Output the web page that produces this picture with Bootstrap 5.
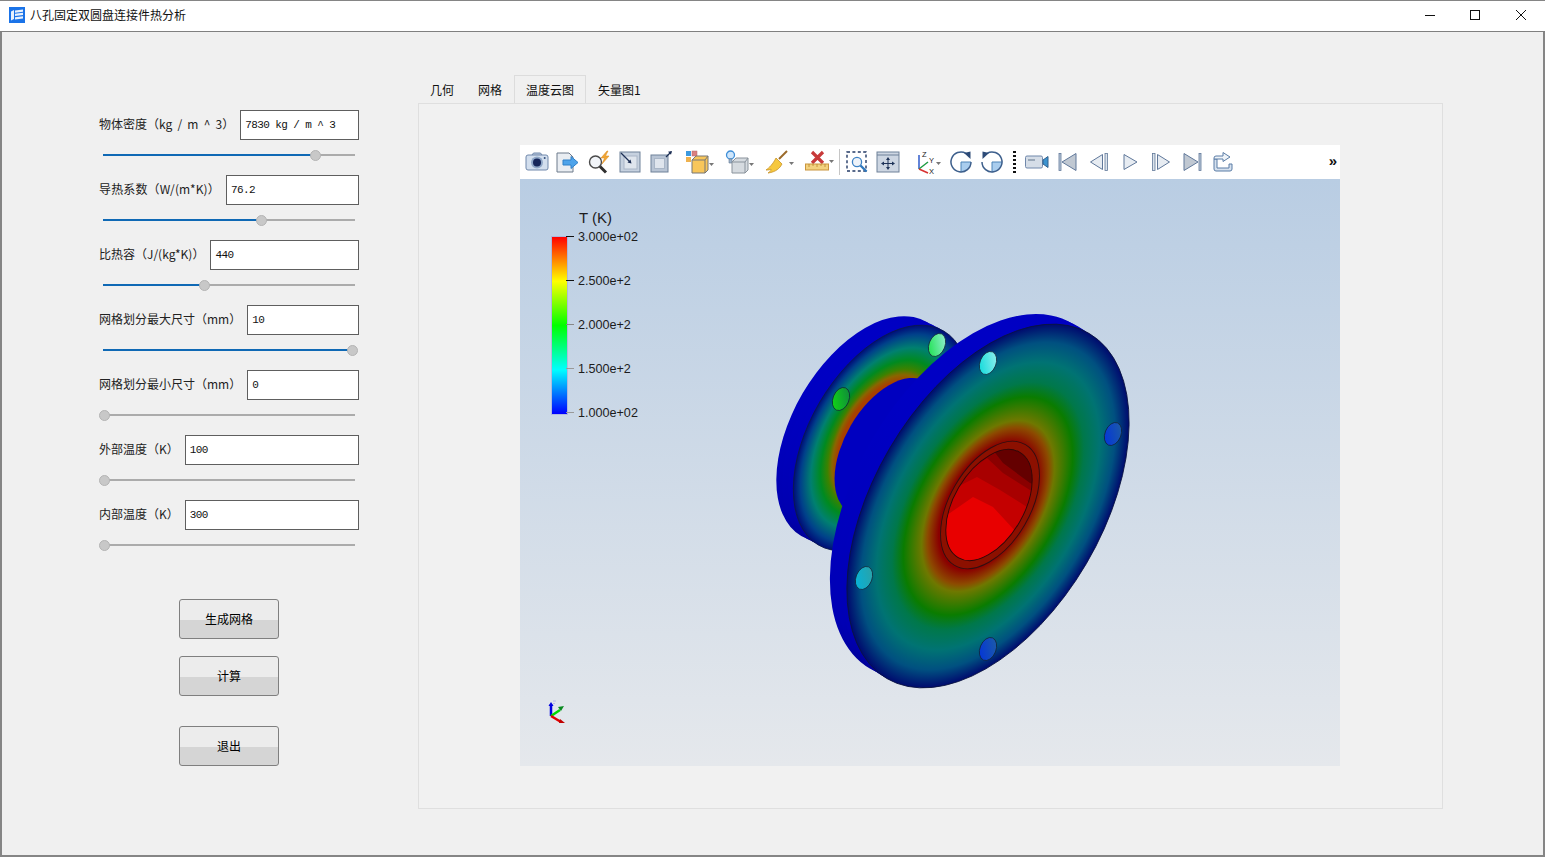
<!DOCTYPE html>
<html lang="zh-CN">
<head>
    <meta charset="UTF-8">
    <meta name="viewport" content="width=device-width, initial-scale=1.0">
    <title>八孔固定双圆盘连接件热分析</title>
    <link href="https://cdn.jsdelivr.net/npm/bootstrap@5.3.3/dist/css/bootstrap.min.css" rel="stylesheet" crossorigin="anonymous">
    <style>
        html, body { height: 100%; overflow: hidden; }
        body { font-family: "Noto Sans CJK SC", "Liberation Sans", sans-serif; font-size: 12px; color: #111; background: #f0f0f0; }
        .app-window { width: 1545px; height: 857px; border: 2px solid #858585; border-top-width: 1px; background: #f0f0f0; }
        .title-bar { height: 28px; background: #fff; margin: 0 -2px; padding: 0 1px 2px 9px; border-bottom: 1px solid #808080; box-sizing: content-box; line-height: 28px; }
        .title-text { margin-left: 5px; font-size: 12px; color: #111; }
        .win-btn { width: 46px; height: 28px; display: flex; align-items: center; justify-content: center; }
        .win-btn.win-min { width: 44px; }

        .side-panel { width: 416px; padding: 78px 0 0 97px; flex: none; }
        .param-group { width: 260px; height: 65px; }
        .param-row { height: 30px; gap: 6px; }
        .param-label { white-space: nowrap; font-size: 12px; color: #222; margin-bottom: 2px; }
        .param-label.label-spaced { word-spacing: 2.5px; }
        .param-label.label-loose { letter-spacing: .15px; }
        .param-input.form-control { flex: 1 1 0; min-width: 0; height: 30px; min-height: 0; border: 1px solid #5e5e5e; border-radius: 0; padding: 0 4px; font-family: "Liberation Mono", monospace; font-size: 11px; letter-spacing: -.6px; color: #111; background: #fff; box-shadow: none; }
        .param-slider.form-range { display: block; width: 258.5px; height: 16px; margin-top: 7px; padding: 0; background: none; }
        .param-slider.form-range::-webkit-slider-runnable-track { height: 2px; border-radius: 0; background: linear-gradient(to right, transparent 4px, #0f69b5 4px, #0f69b5 var(--fill), #ababab var(--fill), #ababab 256px, transparent 256px); }
        .param-slider.form-range::-webkit-slider-thumb { width: 11px; height: 11px; margin-top: -4.5px; border: 1px solid #b4b4b4; border-radius: 50%; background: #c8c8c8; box-shadow: none; }

        .action-list { width: 100px; margin: 34px 0 0 80px; }
        .action-btn.btn { display: block; width: 100px; height: 40px; padding: 0; border: 1px solid #7f7f7f; border-radius: 3px; font-size: 12px; color: #000; background: linear-gradient(to bottom, #ececec 0, #ececec 52%, #d5d5d5 52%, #d5d5d5 100%); }
        .action-btn + .action-btn { margin-top: 17px; }
        .action-btn.action-gap { margin-top: 30px; }

        .work-panel { width: 1025px; padding-top: 43px; flex: none; }
        .view-tabs.nav-tabs { border-bottom: 0; height: 28px; flex-wrap: nowrap; }
        .view-tabs .nav-link { height: 28px; padding: 0 11px; margin: 0; line-height: 27px; font-size: 12px; color: #111; border: 1px solid transparent; border-bottom: 0; border-radius: 0; background: none; }
        .view-tabs .nav-link.active { color: #111; border-color: #dcdcdc; background: #f0f0f0; }
        .tab-body { height: 706px; border: 1px solid #dfdfdf; padding: 41px 0 0 101px; background: #f1f1f1; }

        .viewer { width: 820px; height: 621px; }
        .viewer-bar { height: 34px; padding-left: 1.5px; background: #fff; }
        .bar-item { width: 31px; height: 34px; flex: none; display: flex; align-items: center; justify-content: center; }
        .bar-item.bar-menu { width: 40px; }
        .bar-item.bar-axes { width: 41.5px; }
        .bar-sep { width: 1px; height: 26px; margin: 0 2px; background: #c6c6c6; flex: none; align-self: center; }
        .bar-dots { width: 14px; height: 24px; flex: none; align-self: center; margin: 0; background: radial-gradient(circle at center, #111 1.2px, transparent 1.4px) center top / 3px 4px repeat-y; }
        .bar-more { margin: 0 0 0 auto; width: 14px; font-family: "Liberation Sans", sans-serif; font-size: 15px; font-weight: 700; line-height: 32px; text-align: center; color: #111; }

        .render-area { height: 587px; background: linear-gradient(to bottom, #b9cde3 0%, #e5e8ec 100%); }
        .render-area svg { display: block; }
        .scale-legend { left: 32px; top: 30px; font-family: "Liberation Sans", sans-serif; color: #1c1c1c; }
        .legend-title { position: absolute; left: 27px; top: 0; font-size: 15px; line-height: 18px; white-space: nowrap; }
        .legend-bar { position: absolute; left: 0; top: 28px; width: 15px; height: 177px; background: linear-gradient(to bottom, #f00 0%, #ff0 25%, #0f0 50%, #0ff 75%, #00f 100%); box-shadow: 0 0 0 1px rgba(150,150,210,.45); }
        .legend-tick { position: absolute; left: 26px; font-size: 12.6px; line-height: 16px; white-space: nowrap; }
        .legend-tick::before { content: ""; position: absolute; left: -12px; top: 7px; width: 8px; height: 1px; background: var(--tick); }
    </style>
</head>
<body>
<div class="app-window d-flex flex-column">
    <!-- title bar -->
    <div class="title-bar d-flex align-items-center">
        <svg width="16" height="16" viewBox="0 0 16 16">
            <rect width="16" height="16" fill="#1a73e8"/>
            <path d="M2 4.500 5 3v9L2 13.500zM6 3.500l8-1v2.200l-8 1zM6 6.800l8-1v2.200l-8 1zM6 10.200l8-1v2.200l-8 1z" fill="#e8f1fd"/>
        </svg>
        <span class="title-text">八孔固定双圆盘连接件热分析</span>
        <div class="ms-auto d-flex">
            <div class="win-btn win-min"><svg width="12" height="12" viewBox="0 0 12 12"><path d="M1 6.500h10" stroke="#111"/></svg></div>
            <div class="win-btn"><svg width="12" height="12" viewBox="0 0 12 12"><rect x="1.500" y="1.500" width="9" height="9" fill="none" stroke="#111"/></svg></div>
            <div class="win-btn"><svg width="12" height="12" viewBox="0 0 12 12"><path d="M1 1l10 10M11 1 1 11" stroke="#111"/></svg></div>
        </div>
    </div>

    <div class="d-flex flex-grow-1">
        <!-- parameters -->
        <div class="side-panel">
            <div class="param-group">
                <div class="param-row d-flex align-items-center"><label class="param-label label-spaced">物体密度（kg / m ^ 3）</label><input class="param-input form-control" value="7830 kg / m ^ 3"></div>
                <input type="range" class="param-slider form-range" min="0" max="1000" value="851" style="--fill: 216px">
            </div>
            <div class="param-group">
                <div class="param-row d-flex align-items-center"><label class="param-label label-loose">导热系数（W/(m*K)）</label><input class="param-input form-control" value="76.2"></div>
                <input type="range" class="param-slider form-range" min="0" max="1000" value="633" style="--fill: 162px">
            </div>
            <div class="param-group">
                <div class="param-row d-flex align-items-center"><label class="param-label">比热容（J/(kg*K)）</label><input class="param-input form-control" value="440"></div>
                <input type="range" class="param-slider form-range" min="0" max="1000" value="403" style="--fill: 105px">
            </div>
            <div class="param-group">
                <div class="param-row d-flex align-items-center"><label class="param-label">网格划分最大尺寸（mm）</label><input class="param-input form-control" value="10"></div>
                <input type="range" class="param-slider form-range" min="0" max="1000" value="1000" style="--fill: 253px">
            </div>
            <div class="param-group">
                <div class="param-row d-flex align-items-center"><label class="param-label">网格划分最小尺寸（mm）</label><input class="param-input form-control" value="0"></div>
                <input type="range" class="param-slider form-range" min="0" max="1000" value="0" style="--fill: 4px">
            </div>
            <div class="param-group">
                <div class="param-row d-flex align-items-center"><label class="param-label">外部温度（K）</label><input class="param-input form-control" value="100"></div>
                <input type="range" class="param-slider form-range" min="0" max="1000" value="0" style="--fill: 4px">
            </div>
            <div class="param-group">
                <div class="param-row d-flex align-items-center"><label class="param-label">内部温度（K）</label><input class="param-input form-control" value="300"></div>
                <input type="range" class="param-slider form-range" min="0" max="1000" value="0" style="--fill: 4px">
            </div>
            <div class="action-list">
                <button type="button" class="action-btn btn">生成网格</button>
                <button type="button" class="action-btn btn">计算</button>
                <button type="button" class="action-btn action-gap btn">退出</button>
            </div>
        </div>

        <!-- tabs with the viewer -->
        <div class="work-panel">
            <ul class="view-tabs nav nav-tabs">
                <li class="nav-item"><a class="nav-link" href="#">几何</a></li>
                <li class="nav-item"><a class="nav-link" href="#">网格</a></li>
                <li class="nav-item"><a class="nav-link active" href="#">温度云图</a></li>
                <li class="nav-item"><a class="nav-link" href="#">矢量图1</a></li>
            </ul>
            <div class="tab-body">
                <div class="viewer">
                    <div class="viewer-bar d-flex">
                        <!-- camera -->
                        <div class="bar-item"><svg width="24" height="24" viewBox="0 0 24 24"><path d="M7 5l1.500-2h7L17 5" fill="#b9c8dc" stroke="#7088ab"/><rect x="1" y="5" width="22" height="15" rx="2" fill="#d3dfee" stroke="#7088ab"/><circle cx="12" cy="12.500" r="6" fill="#8fa7c7"/><circle cx="12" cy="12.500" r="4" fill="#16265a"/><circle cx="19.700" cy="8" r="1" fill="#33507c"/></svg></div>
                        <!-- export -->
                        <div class="bar-item"><svg width="24" height="24" viewBox="0 0 24 24"><path d="M1 3h12l4 4v15H1z" fill="#e9edf2" stroke="#6d7a8b"/><path d="M7 10h8V6.500l7 6-7 6V15H7z" fill="#4ea3ea" stroke="#2f80c9"/></svg></div>
                        <!-- magnifier with bolt -->
                        <div class="bar-item"><svg width="24" height="24" viewBox="0 0 24 24"><circle cx="8.500" cy="12" r="6" fill="#f1f4f8" stroke="#4a4a4a" stroke-width="1.400"/><path d="M13 16.500l6 6" stroke="#2f2f2f" stroke-width="3"/><path d="M20 1l-6 7h3.500L15 14l7-8h-3.500L21 1z" fill="#f1a635" stroke="#d9861a" stroke-width=".5"/></svg></div>
                        <!-- fit view -->
                        <div class="bar-item"><svg width="24" height="24" viewBox="0 0 24 24"><rect x="2" y="2" width="20" height="20" fill="#c6d1df" stroke="#6f8199"/><rect x="6" y="6" width="13" height="13" fill="#dfe5ed" stroke="#a9b6c7"/><path d="M3 3l9 9" stroke="#1d2f55" stroke-width="1.200"/><path d="M13.500 13.500l-1-4-3 3z" fill="#1d2f55"/></svg></div>
                        <!-- zoom out view -->
                        <div class="bar-item"><svg width="24" height="24" viewBox="0 0 24 24"><rect x="2" y="5" width="17" height="17" fill="#b8c4d4" stroke="#6f8199"/><rect x="5.500" y="8.500" width="10" height="10" fill="#dfe5ed" stroke="#a9b6c7"/><path d="M17 7l5-5" stroke="#1d2f55" stroke-width="1.200"/><path d="M23 1l-4 .8 3 3z" fill="#1d2f55"/></svg></div>
                        <!-- block colours -->
                        <div class="bar-item bar-menu"><svg width="34" height="24" viewBox="0 0 34 24"><rect x="6" y="1" width="5" height="5" fill="#3c9ae0"/><rect x="12" y="1" width="5" height="5" fill="#d98080" stroke="#b56a6a" stroke-width=".5"/><rect x="6" y="7" width="5" height="5" fill="#eeb24f"/><path d="M12 10l4-4h12v14l-3 3H12z" fill="#f8c65a" stroke="#777"/><path d="M12 10h13v13M25 10l3-4" fill="none" stroke="#777"/><path d="M29 13h5l-2.500 3z" fill="#777"/></svg></div>
                        <!-- light and cube -->
                        <div class="bar-item bar-menu"><svg width="34" height="24" viewBox="0 0 34 24"><circle cx="10.500" cy="5" r="4" fill="#cfe6fb" stroke="#3f8fd8" stroke-width="1.300"/><path d="M9 9h3v4H9z" fill="#9eb3c9" stroke="#5f7690" stroke-width=".6"/><path d="M12 12l4-4h12v12l-3 3H12z" fill="#d6dbe0" stroke="#8a939c"/><path d="M12 12h13v11M25 12l3-4" fill="none" stroke="#8a939c"/><path d="M29 13h5l-2.500 3z" fill="#777"/></svg></div>
                        <!-- broom -->
                        <div class="bar-item bar-menu"><svg width="34" height="24" viewBox="0 0 34 24"><g transform="translate(5 0)"><path d="M14 9l8-8" stroke="#9b6a2a" stroke-width="2"/><path d="M11 8l6 6c-2 4-6 8-14 9 3-2 3-3 3-4-1 1-3 1-5 1 3-2 7-6 10-12z" fill="#f6c83f" stroke="#c8932a" stroke-width=".8"/></g><path d="M29 12h5l-2.500 3z" fill="#777"/></svg></div>
                        <!-- ruler with cross -->
                        <div class="bar-item bar-menu"><svg width="34" height="24" viewBox="0 0 34 24"><g transform="translate(5 0)"><path d="M7 2l11 11M18 2 7 13" stroke="#c83a3a" stroke-width="3.200"/><rect x="0.500" y="14" width="23" height="6" fill="#f3d27f" stroke="#c9953e"/><path d="M4 14v3M8 14v2M12 14v3M16 14v2M20 14v3" stroke="#b8862f" stroke-width=".8"/></g><path d="M29 10h5l-2.500 3z" fill="#777"/></svg></div>
                        <div class="bar-sep"></div>
                        <!-- zoom to box -->
                        <div class="bar-item"><svg width="24" height="24" viewBox="0 0 24 24"><rect x="2" y="2" width="19" height="19" fill="none" stroke="#233a66" stroke-width="1.400" stroke-dasharray="3 2.400"/><circle cx="12" cy="12" r="4.600" fill="#eef3f9" stroke="#3d82c4" stroke-width="1.300"/><path d="M15.500 15.500l6 6" stroke="#2f78bd" stroke-width="2.400"/></svg></div>
                        <!-- pan -->
                        <div class="bar-item"><svg width="24" height="24" viewBox="0 0 24 24"><rect x="1" y="2" width="22" height="20" fill="#cdd6e2" stroke="#6f8199"/><path d="M1 5h22" stroke="#6f8199"/><path d="M12 7l-2 3h4zM12 20l-2-3h4zM5 13.500l3-2v4zM19 13.500l-3-2v4z" fill="#1f3358"/><path d="M8 13.500h8M12 10v7" stroke="#1f3358"/></svg></div>
                        <!-- axes -->
                        <div class="bar-item bar-axes"><svg width="36" height="26" viewBox="0 0 36 26"><g transform="translate(7 0)"><path d="M6 20V6" stroke="#2250c8" stroke-width="1.400"/><path d="M6 20l9-7" stroke="#1b9b40" stroke-width="1.400"/><path d="M6 20l9 4" stroke="#d83030" stroke-width="1.400"/><text x="9" y="8" font-family="Liberation Sans" font-size="7.500" fill="#222">Z</text><text x="16" y="14" font-family="Liberation Sans" font-size="7.500" fill="#222">Y</text><text x="16" y="25" font-family="Liberation Sans" font-size="7.500" fill="#222">X</text></g><path d="M30 13h5l-2.500 3z" fill="#777"/></svg></div>
                        <!-- rotate cw -->
                        <div class="bar-item"><svg width="24" height="24" viewBox="0 0 24 24"><path d="M12 12h10a10 10 0 0 1-10 10z" fill="#a9cdee"/><path d="M12 22V12h10" fill="none" stroke="#4d84b8"/><path d="M17 3.300A10 10 0 1 0 22 12" fill="none" stroke="#3d5f8c" stroke-width="1.500"/><path d="M15 3l6.500-1.500V9z" fill="#2d4b77"/></svg></div>
                        <!-- rotate ccw -->
                        <div class="bar-item"><svg width="24" height="24" viewBox="0 0 24 24"><path d="M12 12h10a10 10 0 0 1-10 10z" fill="#a9cdee"/><path d="M12 22V12h10" fill="none" stroke="#4d84b8"/><path d="M7 3.300A10 10 0 1 1 2 12" fill="none" stroke="#3d5f8c" stroke-width="1.500"/><path d="M9 3 2.500 1.500V9z" fill="#2d4b77"/></svg></div>
                        <div class="bar-dots"></div>
                        <!-- video camera -->
                        <div class="bar-item"><svg width="24" height="24" viewBox="0 0 24 24"><rect x="0.500" y="6" width="17" height="12" rx="1.500" fill="#d5dde7" stroke="#7088ab"/><rect x="3" y="9" width="7" height="2" fill="#9aa8b8"/><path d="M18 10l5-3.500v11L18 14z" fill="#3c93cf" stroke="#33608c"/></svg></div>
                        <!-- first -->
                        <div class="bar-item"><svg width="24" height="24" viewBox="0 0 24 24"><rect x="3" y="3.500" width="2" height="17" fill="#bccada" stroke="#60789a" stroke-width=".8"/><path d="M20 3.500v17L6 12z" fill="#c0c8d2" stroke="#60789a"/></svg></div>
                        <!-- previous -->
                        <div class="bar-item"><svg width="24" height="24" viewBox="0 0 24 24"><rect x="18" y="3.500" width="2.500" height="17" fill="#dbe3ec" stroke="#60789a" stroke-width=".8"/><path d="M15.500 4.500v15L3.500 12z" fill="#e7ecf2" stroke="#60789a"/></svg></div>
                        <!-- play -->
                        <div class="bar-item"><svg width="24" height="24" viewBox="0 0 24 24"><path d="M6 4.500v15L19 12z" fill="#e7ecf2" stroke="#60789a"/></svg></div>
                        <!-- next -->
                        <div class="bar-item"><svg width="24" height="24" viewBox="0 0 24 24"><rect x="3.500" y="3.500" width="2.500" height="17" fill="#dbe3ec" stroke="#60789a" stroke-width=".8"/><path d="M8.500 4.500v15L20.500 12z" fill="#e7ecf2" stroke="#60789a"/></svg></div>
                        <!-- last -->
                        <div class="bar-item"><svg width="24" height="24" viewBox="0 0 24 24"><rect x="19" y="3.500" width="2" height="17" fill="#bccada" stroke="#60789a" stroke-width=".8"/><path d="M4 3.500v17L18 12z" fill="#c0c8d2" stroke="#60789a"/></svg></div>
                        <!-- loop -->
                        <div class="bar-item"><svg width="24" height="24" viewBox="0 0 24 24"><path d="M3 9v10q0 2 2 2h14q2 0 2-2v-5h-3v4H6V9z" fill="#d6e1ee" stroke="#5b7da6"/><path d="M3 9V8q0-2 2-2h7V2.500l7 4.500-7 4.500V9H6z" fill="#eef3f8" stroke="#5b7da6"/></svg></div>
                        <div class="bar-more">»</div>
                    </div>

                    <div class="render-area position-relative">
                        <svg width="820" height="587" viewBox="520 179 820 587">
                            <defs>
                                <linearGradient id="rimFront" x1="0.85" y1="0" x2="0.1" y2="1">
                                    <stop offset="0" stop-color="#0000c8"/><stop offset=".55" stop-color="#0000b4"/><stop offset="1" stop-color="#00006a"/>
                                </linearGradient>
                                <linearGradient id="rimBack" x1="0.8" y1="0" x2="0.1" y2="1">
                                    <stop offset="0" stop-color="#0000c8"/><stop offset=".55" stop-color="#0000b0"/><stop offset="1" stop-color="#000070"/>
                                </linearGradient>
                                <radialGradient id="faceFront" cx=".5" cy=".5" r=".5">
                                    <stop offset="0" stop-color="#8a0000"/><stop offset=".35" stop-color="#8a0000"/>
                                    <stop offset=".43" stop-color="#8c4a00"/><stop offset=".47" stop-color="#6f7800"/>
                                    <stop offset=".6" stop-color="#0a7c00"/><stop offset=".68" stop-color="#00784a"/>
                                    <stop offset=".79" stop-color="#007373"/><stop offset=".9" stop-color="#005080"/>
                                    <stop offset="1" stop-color="#000a6e"/>
                                </radialGradient>
                                <radialGradient id="faceBack" cx=".5" cy=".5" r=".5">
                                    <stop offset="0" stop-color="#a84000"/><stop offset=".5" stop-color="#a84000"/>
                                    <stop offset=".56" stop-color="#8a6500"/><stop offset=".61" stop-color="#3c8200"/>
                                    <stop offset=".69" stop-color="#008a20"/><stop offset=".8" stop-color="#008070"/>
                                    <stop offset=".92" stop-color="#00408a"/><stop offset="1" stop-color="#000c78"/>
                                </radialGradient>
                                <clipPath id="boreClip"><ellipse cx="989" cy="505" rx="61" ry="35" transform="rotate(-59.6 989 505)"/></clipPath>
                                <linearGradient id="holeCyan" x1="0" y1="1" x2="1" y2="0"><stop offset="0" stop-color="#00d8d8"/><stop offset="1" stop-color="#a0f0f0"/></linearGradient>
                                <linearGradient id="holeTeal" x1="0" y1="1" x2="1" y2="0"><stop offset="0" stop-color="#00b4e0"/><stop offset="1" stop-color="#30a0a0"/></linearGradient>
                                <linearGradient id="holeBlue" x1="0" y1="1" x2="1" y2="0"><stop offset="0" stop-color="#0030e0"/><stop offset="1" stop-color="#2060a0"/></linearGradient>
                                <linearGradient id="holeGreen" x1="0" y1="1" x2="1" y2="0"><stop offset="0" stop-color="#10e010"/><stop offset="1" stop-color="#108040"/></linearGradient>
                                <linearGradient id="holeMint" x1="0" y1="1" x2="1" y2="0"><stop offset="0" stop-color="#10e040"/><stop offset="1" stop-color="#a0f0e0"/></linearGradient>
                            </defs>

                            <!-- back disc -->
                            <g fill="url(#rimBack)">
                                <ellipse cx="864" cy="429" rx="124" ry="71" transform="rotate(-59.6 864 429)"/>
                                <ellipse cx="870" cy="432" rx="124" ry="71" transform="rotate(-59.6 870 432)"/>
                                <ellipse cx="876" cy="435" rx="124" ry="71" transform="rotate(-59.6 876 435)"/>
                            </g>
                            <ellipse cx="881" cy="438" rx="124" ry="71" transform="rotate(-59.6 881 438)" fill="url(#faceBack)" stroke="#0b1a4a" stroke-width=".8"/>
                            <ellipse cx="937" cy="345" rx="8" ry="12" transform="rotate(22 937 345)" fill="url(#holeMint)" stroke="#123" stroke-width=".7"/>
                            <ellipse cx="841" cy="399" rx="8" ry="12" transform="rotate(22 841 399)" fill="url(#holeGreen)" stroke="#123" stroke-width=".7"/>

                            <!-- neck -->
                            <ellipse cx="888" cy="447" rx="76" ry="43" transform="rotate(-59.6 888 447)" fill="#0000c0"/>
                            <ellipse cx="905" cy="470" rx="76" ry="43" transform="rotate(-59.6 905 470)" fill="#0000a8"/>

                            <!-- front disc -->
                            <g fill="url(#rimFront)">
                                <ellipse cx="971" cy="496" rx="200" ry="114" transform="rotate(-59.6 971 496)"/>
                                <ellipse cx="977" cy="499" rx="200" ry="114" transform="rotate(-59.6 977 499)"/>
                                <ellipse cx="983" cy="503" rx="200" ry="114" transform="rotate(-59.6 983 503)"/>
                            </g>
                            <ellipse cx="988" cy="506" rx="200" ry="114" transform="rotate(-59.6 988 506)" fill="url(#faceFront)" stroke="#0a1440" stroke-width=".8"/>
                            <ellipse cx="990" cy="505" rx="70" ry="40" transform="rotate(-59.6 990 505)" fill="#8c1000" stroke="#301010" stroke-width=".9"/>
                            <!-- bore, flat shaded bands -->
                            <g clip-path="url(#boreClip)">
                                <rect x="930" y="440" width="110" height="130" fill="#e80000"/>
                                <path d="M930 520 950 513 973 497 993 507 1017 533 1040 540V440H930z" fill="#c40000"/>
                                <path d="M930 500 957 487 977 477 1000 490 1027 507 1040 515V440H930z" fill="#a80000"/>
                                <path d="M950 480 970 470 987 458 1003 473 1030 490 1040 495V440H950z" fill="#8a0000"/>
                                <path d="M975 440 993 450 1003 463 1030 483 1040 486V440z" fill="#640000"/>
                            </g>
                            <ellipse cx="989" cy="505" rx="61" ry="35" transform="rotate(-59.6 989 505)" fill="none" stroke="#2c0808" stroke-width=".9"/>
                            <ellipse cx="988" cy="363" rx="8" ry="12" transform="rotate(22 988 363)" fill="url(#holeCyan)" stroke="#123" stroke-width=".7"/>
                            <ellipse cx="1113" cy="434" rx="8" ry="12" transform="rotate(22 1113 434)" fill="url(#holeBlue)" stroke="#123" stroke-width=".7"/>
                            <ellipse cx="988" cy="649" rx="8" ry="12" transform="rotate(22 988 649)" fill="url(#holeBlue)" stroke="#123" stroke-width=".7"/>
                            <ellipse cx="864" cy="578" rx="8" ry="12" transform="rotate(22 864 578)" fill="url(#holeTeal)" stroke="#123" stroke-width=".7"/>

                            <!-- small orientation triad -->
                            <path d="M551 716V704" stroke="#0000e0" stroke-width="2.500"/>
                            <path d="M548.500 706l2.500-4 2.500 4z" fill="#0000e0"/>
                            <path d="M553 701h3M553 703.500h2" stroke="#b8b8e8"/>
                            <path d="M551 716l9-6" stroke="#00d800" stroke-width="2.500"/>
                            <path d="M558 707l6-1-3 5z" fill="#0a8a20"/>
                            <path d="M551 716l10 6" stroke="#e00000" stroke-width="2.500"/>
                            <path d="M560 719l5 4h-6z" fill="#c00000"/>
                        </svg>

                        <div class="scale-legend position-absolute">
                            <div class="legend-title">T (K)</div>
                            <div class="legend-bar"></div>
                            <div class="legend-tick" style="top: 20px; --tick: #111">3.000e+02</div>
                            <div class="legend-tick" style="top: 64px; --tick: #111">2.500e+2</div>
                            <div class="legend-tick" style="top: 108px; --tick: #888">2.000e+2</div>
                            <div class="legend-tick" style="top: 152px; --tick: #999">1.500e+2</div>
                            <div class="legend-tick" style="top: 196px; --tick: #999">1.000e+02</div>
                        </div>
                    </div>
                </div>
            </div>
        </div>
    </div>
</div>
<script src="https://cdn.jsdelivr.net/npm/bootstrap@5.3.3/dist/js/bootstrap.bundle.min.js" crossorigin="anonymous"></script>
</body>
</html>
